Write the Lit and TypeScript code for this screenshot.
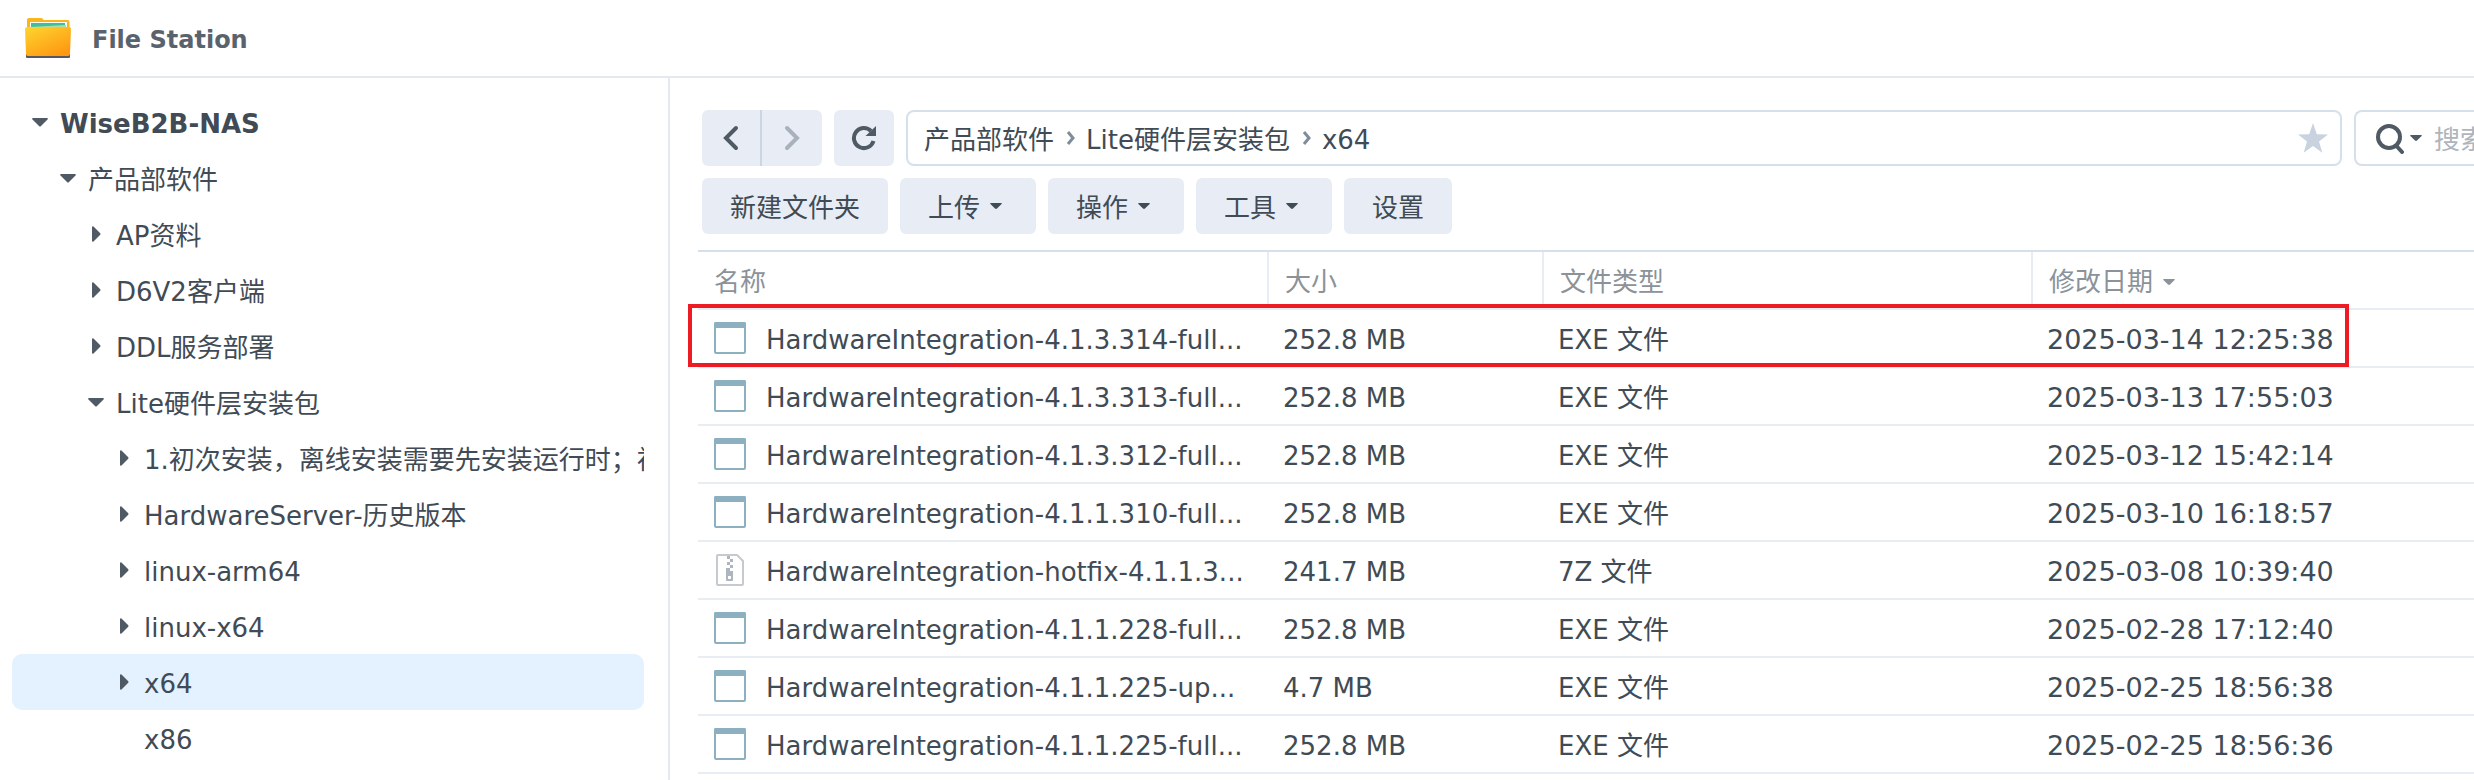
import { LitElement, html, css, nothing } from "lit";
import { customElement } from "lit/decorators.js";
import { classMap } from "lit/directives/class-map.js";

interface Node {
  label: string;
  level: number;
  state: "open" | "closed" | "leaf";
  selected?: boolean;
}

const TREE: Node[] = [
  { label: "WiseB2B-NAS", level: 0, state: "open" },
  { label: "产品部软件", level: 1, state: "open" },
  { label: "AP资料", level: 2, state: "closed" },
  { label: "D6V2客户端", level: 2, state: "closed" },
  { label: "DDL服务部署", level: 2, state: "closed" },
  { label: "Lite硬件层安装包", level: 2, state: "open" },
  { label: "1.初次安装，离线安装需要先安装运行时；初", level: 3, state: "closed" },
  { label: "HardwareServer-历史版本", level: 3, state: "closed" },
  { label: "linux-arm64", level: 3, state: "closed" },
  { label: "linux-x64", level: 3, state: "closed" },
  { label: "x64", level: 3, state: "closed", selected: true },
  { label: "x86", level: 3, state: "leaf" },
];

interface FileRow {
  name: string;
  size: string;
  type: string;
  date: string;
  marked?: boolean;
}

const FILES: FileRow[] = [
  { name: "HardwareIntegration-4.1.3.314-full...", size: "252.8 MB", type: "EXE 文件", date: "2025-03-14 12:25:38", marked: true },
  { name: "HardwareIntegration-4.1.3.313-full...", size: "252.8 MB", type: "EXE 文件", date: "2025-03-13 17:55:03" },
  { name: "HardwareIntegration-4.1.3.312-full...", size: "252.8 MB", type: "EXE 文件", date: "2025-03-12 15:42:14" },
  { name: "HardwareIntegration-4.1.1.310-full...", size: "252.8 MB", type: "EXE 文件", date: "2025-03-10 16:18:57" },
  { name: "HardwareIntegration-hotfix-4.1.1.3...", size: "241.7 MB", type: "7Z 文件", date: "2025-03-08 10:39:40" },
  { name: "HardwareIntegration-4.1.1.228-full...", size: "252.8 MB", type: "EXE 文件", date: "2025-02-28 17:12:40" },
  { name: "HardwareIntegration-4.1.1.225-up...", size: "4.7 MB", type: "EXE 文件", date: "2025-02-25 18:56:38" },
  { name: "HardwareIntegration-4.1.1.225-full...", size: "252.8 MB", type: "EXE 文件", date: "2025-02-25 18:56:36" },
];

const caretDown = html`<svg width="12" height="6" viewBox="0 0 12 6" aria-hidden="true">
  <path d="M1 0h10q1.400.2.6 1.100L7 5.500q-1 .8-2 0L.4 1.100Q-.4.2 1 0z" fill="currentColor"/></svg>`;

const treeOpen = html`<svg width="16" height="9" viewBox="0 0 16 9" aria-hidden="true">
  <path d="M1 0h14q1.300.4.5 1.500L9 8q-1 1-2 0L.5 1.500Q-.3.4 1 0z" fill="currentColor"/></svg>`;

const treeClosed = html`<svg width="9" height="16" viewBox="0 0 9 16" aria-hidden="true">
  <path d="M0 1q.4-1.300 1.500-.5L8 7q1 1 0 2l-6.500 6.500Q.4 16.300 0 15z" fill="currentColor"/></svg>`;

const exeIcon = html`<svg width="32" height="32" viewBox="0 0 32 32" aria-hidden="true">
  <rect x="1" y="1" width="30" height="30" rx="1" fill="#fff" stroke="#8cb0c0" stroke-width="2"/>
  <path d="M0 6V1.500Q0 0 1.500 0h29Q32 0 32 1.500V6z" fill="#8cb0c0"/></svg>`;

const zipIcon = html`<svg width="32" height="32" viewBox="0 0 32 32" aria-hidden="true">
  <path d="M4 1h19l6 6v23q0 1-1 1H4q-1 0-1-1V2q0-1 1-1z" fill="#fff" stroke="#c5c9d0" stroke-width="2"/>
  <path d="M13 2h3v3h-3zM16 5h3v3h-3zM13 8h3v3h-3zM16 11h3v3h-3z" fill="#adb5be"/>
  <path d="M12 14h4v3h3v9q0 1-1 1h-5q-1 0-1-1zM14 22v3h3v-3z" fill="#adb5be" fill-rule="evenodd"/></svg>`;

const crumbSep = html`<svg class="sep" width="9" height="14" viewBox="0 0 9 14" aria-hidden="true">
  <path d="M2 1l5 6-5 6" fill="none" stroke="#7f8c9c" stroke-width="3"/></svg>`;

@customElement("app-root")
export class AppRoot extends LitElement {
  static styles = css`
    :host {
      display: block;
      height: 100vh;
      overflow: hidden;
      background: #fff;
      color: #414b55;
      font-family: Verdana, "DejaVu Sans", "Noto Sans CJK SC", sans-serif;
      font-size: 26px;
      line-height: 40px;
    }
    * { box-sizing: border-box; }
    button, input { font: inherit; color: inherit; }
    button { border: 0; background: none; padding: 0; cursor: pointer; }
    svg { display: block; flex: none; }
    .window { display: flex; flex-direction: column; height: 100%; }
    .titlebar {
      display: flex; align-items: center; gap: 20px; flex: none;
      height: 78px; padding: 0 24px; border-bottom: 2px solid #e3e9f0;
    }
    .title { margin: 0; font-size: 24px; font-weight: 700; color: #5a636d; }
    .body { display: flex; flex: 1; min-height: 0; }
    .side {
      flex: none; width: 670px; padding: 16px 24px 0 12px;
      border-right: 2px solid #e3e9f0; overflow: hidden;
    }
    .tree { list-style: none; margin: 0; padding: 0; }
    .node {
      display: flex; align-items: center; height: 56px; padding-left: 14px;
      border-radius: 10px; overflow: hidden; white-space: nowrap;
    }
    .level1 { padding-left: 42px; }
    .level2 { padding-left: 70px; }
    .level3 { padding-left: 98px; }
    .root { font-weight: 700; }
    .selected { background: #e4f1fe; }
    .toggle {
      display: grid; place-items: center; flex: none;
      width: 28px; height: 28px; margin-right: 6px; color: #505a64;
    }
    .link { color: inherit; text-decoration: none; }
    .link, .text { padding-top: 3px; }
    .main { flex: 1; min-width: 0; padding: 32px 0 0 28px; overflow: hidden; }
    .bar { display: flex; gap: 12px; padding-left: 4px; margin-bottom: 12px; }
    .pair { display: flex; flex: none; border-radius: 6px; overflow: hidden; }
    .btn {
      display: flex; align-items: center; justify-content: center; gap: 10px;
      flex: none; height: 56px; padding: 0 28px; background: #e8edf5; border-radius: 6px;
    }
    .menu { padding: 0 34px 0 28px; }
    .icon { width: 60px; padding: 0; color: #505a64; }
    .pair .icon { border-radius: 0; }
    .back { border-right: 2px solid #c8d7e3; }
    .off { color: #a9b1bb; }
    .path {
      display: flex; align-items: center; flex: 1; min-width: 0; height: 56px;
      padding: 0 12px 0 16px; border: 2px solid #d5e0ea; border-radius: 8px; white-space: nowrap;
    }
    .sep { margin: 0 11px 0 12px; }
    .star { margin-left: auto; }
    .search {
      display: flex; align-items: center; flex: none; width: 120px; height: 56px;
      padding-left: 20px; border: 2px solid #d5e0ea; border-right: 0;
      border-radius: 8px 0 0 8px; overflow: hidden;
    }
    .query { flex: none; width: 240px; margin-left: 12px; padding: 3px 0 0; border: 0; outline: 0; background: none; }
    .query::placeholder { color: #afb5bb; opacity: 1; }
    .finder { display: flex; align-items: center; gap: 2px; color: #505a64; }
    .files {
      width: 100%; margin-top: 16px; border-collapse: separate; border-spacing: 0;
      table-layout: fixed; border-top: 2px solid #d5e0ea; text-align: left;
    }
    .files th, .files td { height: 58px; padding: 0 16px; border-bottom: 2px solid #e8edf3; white-space: nowrap; }
    .files th { padding-top: 3px; font-weight: 400; color: #8b9299; }
    .files th + th { border-left: 2px solid #e8edf3; }
    .files td + td { padding-top: 3px; }
    .files .date { font-size: 27px; }
    .name { width: 569px; }
    .size { width: 275px; }
    .type { width: 489px; }
    .sort { display: flex; align-items: center; gap: 10px; }
    .file { display: flex; align-items: center; gap: 20px; }
    .marked { position: relative; }
    .mark {
      position: absolute; inset: -6px 125px 1px -10px;
      border: 4px solid #ed1c24; pointer-events: none;
    }
  `;

  private node(n: Node) {
    const cls = { node: true, ["level" + n.level]: true, root: n.level === 0, selected: !!n.selected };
    return html`<li class=${classMap(cls)}>
      ${n.state === "leaf"
        ? html`<span class="toggle"></span>`
        : html`<button class="toggle" aria-label=${n.label}>${n.state === "open" ? treeOpen : treeClosed}</button>`}
      <a class="link" href="#">${n.label}</a>
    </li>`;
  }

  private row(f: FileRow) {
    return html`<tr class=${f.marked ? "marked" : ""}>
      <td>
        <div class="file">${f.type.startsWith("7Z") ? zipIcon : exeIcon}<span class="text">${f.name}</span></div>
        ${f.marked ? html`<div class="mark"></div>` : nothing}
      </td>
      <td>${f.size}</td>
      <td>${f.type}</td>
      <td class="date">${f.date}</td>
    </tr>`;
  }

  render() {
    return html`<div class="window">
      <header class="titlebar">
        <svg width="48" height="44" viewBox="0 0 48 44" aria-hidden="true">
          <defs>
            <linearGradient id="front" x1="0" y1="0" x2=".7" y2="1">
              <stop offset="0" stop-color="#fdd62f"/><stop offset="1" stop-color="#ff9812"/>
            </linearGradient>
          </defs>
          <path d="M3 4q0-2 2-2h12q2 0 2.500 2h24q2 0 2 2v8H3z" fill="#f9b51b"/>
          <path d="M6 6h37v8H6z" fill="#fbfdf5"/>
          <path d="M7 7h34v4H7z" fill="#3fbf9b"/>
          <path d="M6 11l36-2v5H6z" fill="#b5dc9c"/>
          <rect x="2" y="36" width="44" height="6" rx="1" fill="#5a5560"/>
          <path d="M1 13q0-2 2-2h42q2 0 2 2l-1 25q0 2-2 2H4q-2 0-2-2z" fill="url(#front)"/>
        </svg>
        <h1 class="title text">File Station</h1>
      </header>
      <div class="body">
        <nav class="side"><ul class="tree">${TREE.map((n) => this.node(n))}</ul></nav>
        <main class="main">
          <div class="bar">
            <div class="pair">
              <button class="btn icon back" aria-label="后退">
                <svg width="16" height="26" viewBox="0 0 16 26"><path d="M13 3L3 13l10 10" fill="none" stroke="currentColor" stroke-width="4" stroke-linecap="round"/></svg>
              </button>
              <button class="btn icon off" aria-label="前进">
                <svg width="16" height="26" viewBox="0 0 16 26"><path d="M3 3l10 10L3 23" fill="none" stroke="currentColor" stroke-width="4" stroke-linecap="round"/></svg>
              </button>
            </div>
            <button class="btn icon" aria-label="刷新">
              <svg width="26" height="26" viewBox="0 0 26 26"><path d="M22.500 16A10 10 0 1 1 20 6" fill="none" stroke="currentColor" stroke-width="4"/><path d="M25 1v10H14.500z" fill="currentColor"/></svg>
            </button>
            <div class="path">
              <a class="link" href="#">产品部软件</a>${crumbSep}<a class="link" href="#">Lite硬件层安装包</a>${crumbSep}<a class="link" href="#">x64</a>
              <button class="star" aria-label="收藏">
                <svg width="30" height="30" viewBox="0 0 30 30"><path d="M15 0l3.800 11.200L30 11.400l-9 7 3.300 11.400L15 23l-9.300 6.800L9 18.400l-9-7 11.200-.2z" fill="#c8d3df"/></svg>
              </button>
            </div>
            <div class="search">
              <button class="finder" aria-label="搜索选项">
                <svg width="32" height="32" viewBox="0 0 32 32"><circle cx="13" cy="15" r="11" fill="none" stroke="currentColor" stroke-width="4"/><path d="M20.500 24l5.500 6" stroke="currentColor" stroke-width="4" stroke-linecap="round"/></svg>
                ${caretDown}
              </button>
              <input class="query" type="text" placeholder="搜索" aria-label="搜索" />
            </div>
          </div>
          <div class="bar">
            <button class="btn"><span class="text">新建文件夹</span></button>
            <button class="btn menu"><span class="text">上传</span>${caretDown}</button>
            <button class="btn menu"><span class="text">操作</span>${caretDown}</button>
            <button class="btn menu"><span class="text">工具</span>${caretDown}</button>
            <button class="btn"><span class="text">设置</span></button>
          </div>
          <table class="files">
            <thead>
              <tr>
                <th class="name">名称</th>
                <th class="size">大小</th>
                <th class="type">文件类型</th>
                <th><span class="sort">修改日期${caretDown}</span></th>
              </tr>
            </thead>
            <tbody>${FILES.map((f) => this.row(f))}</tbody>
          </table>
        </main>
      </div>
    </div>`;
  }
}
